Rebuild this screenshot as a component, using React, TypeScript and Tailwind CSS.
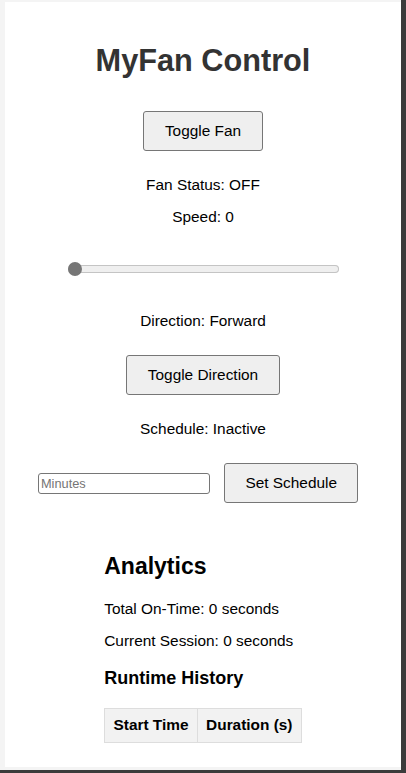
import { useState } from "react";

interface Run {
    start: string;
    duration: number;
}

export default function App() {
    const [fanOn, setFanOn] = useState(false);
    const [speed, setSpeed] = useState(0);
    const [forward, setForward] = useState(true);
    const [minutes, setMinutes] = useState("");
    const [scheduled, setScheduled] = useState(false);
    const [history] = useState<Run[]>([]);

    const btn =
        "h-[40px] px-[20.5px] bg-[#efefef] border border-[#767676] rounded-[3px] text-[15.4px] leading-[18px] text-black";

    return (
        <div
            className="w-[406px] h-[773px] bg-[#3b3b3b] overflow-hidden"
            style={{ fontFamily: '"Liberation Sans", Arial, sans-serif' }}
        >
            <div className="w-[401px] h-[770px] bg-[#f4f4f4] pt-[2px] pl-[5px]">
                <div className="w-[396px] h-[765px] bg-white flex flex-col items-center text-black text-[15.4px] leading-[18px]">
                    {/* Header */}
                    <h1 className="mt-[41.4px] text-[30.7px] leading-[36px] font-bold text-[#333]">
                        MyFan Control
                    </h1>

                    <button onClick={() => setFanOn(!fanOn)} className={`mt-[31.6px] ${btn}`}>
                        Toggle Fan
                    </button>

                    <p className="mt-[24.7px]">Fan Status: {fanOn ? "ON" : "OFF"}</p>
                    <p className="mt-[14.7px]">Speed: {speed}</p>

                    {/* Speed slider */}
                    <div className="mt-[35.6px] h-[14px] flex items-center">
                        <input
                            type="range"
                            min={0}
                            max={100}
                            value={speed}
                            onChange={(e) => setSpeed(Number(e.target.value))}
                            className="appearance-none w-[271px] h-[8px] bg-[#efefef] shadow-[inset_0_0_0_1px_#c4c4c4] rounded-full outline-none [&::-webkit-slider-thumb]:appearance-none [&::-webkit-slider-thumb]:w-[14.5px] [&::-webkit-slider-thumb]:h-[14.5px] [&::-webkit-slider-thumb]:rounded-full [&::-webkit-slider-thumb]:bg-[#767676]"
                        />
                    </div>

                    <p className="mt-[35.7px]">Direction: {forward ? "Forward" : "Reverse"}</p>

                    <button onClick={() => setForward(!forward)} className={`mt-[25.3px] ${btn}`}>
                        Toggle Direction
                    </button>

                    <p className="mt-[24.7px]">Schedule: {scheduled ? "Active" : "Inactive"}</p>

                    {/* Schedule row */}
                    <div className="mt-[25.8px] w-full flex justify-center items-center">
                        <input
                            type="number"
                            placeholder="Minutes"
                            value={minutes}
                            onChange={(e) => setMinutes(e.target.value)}
                            className="w-[172px] h-[21px] px-[2px] border border-[#767676] rounded-[3px] text-[12.8px] text-black placeholder:text-[#757575] outline-none"
                        />
                        <button
                            onClick={() => setScheduled(minutes !== "")}
                            className={`ml-[14px] mr-[9.6px] ${btn}`}
                        >
                            Set Schedule
                        </button>
                    </div>

                    {/* Analytics */}
                    <div className="mt-[48.5px] w-fit text-left">
                        <h2 className="text-[23px] leading-[28px] font-bold">Analytics</h2>
                        <p className="mt-[19.7px]">Total On-Time: 0 seconds</p>
                        <p className="mt-[14.7px]">Current Session: 0 seconds</p>
                        <h3 className="mt-[17.1px] text-[18px] leading-[22px] font-bold">Runtime History</h3>
                        <table className="mt-[18.2px] border-collapse">
                            <thead>
                                <tr>
                                    <th className="px-[8.3px] py-[7.7px] border border-[#dddddd] bg-[#f2f2f2] font-bold text-left">
                                        Start Time
                                    </th>
                                    <th className="px-[8.3px] py-[7.7px] border border-[#dddddd] bg-[#f2f2f2] font-bold text-left">
                                        Duration (s)
                                    </th>
                                </tr>
                            </thead>
                            <tbody>
                                {history.map((r, i) => (
                                    <tr key={i}>
                                        <td className="px-[8.3px] py-[7.7px] border border-[#dddddd]">{r.start}</td>
                                        <td className="px-[8.3px] py-[7.7px] border border-[#dddddd]">{r.duration}</td>
                                    </tr>
                                ))}
                            </tbody>
                        </table>
                    </div>
                </div>
            </div>
        </div>
    );
}
